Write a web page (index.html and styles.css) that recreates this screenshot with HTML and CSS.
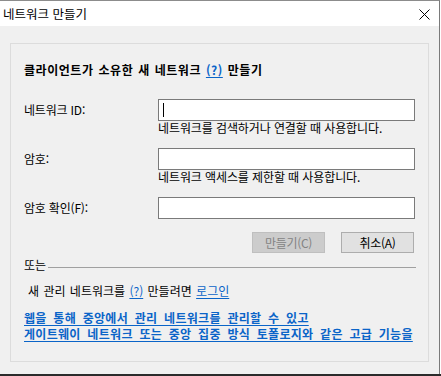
FILE: index.html
```html
<!DOCTYPE html>
<html lang="ko">
<head>
    <meta charset="UTF-8">
    <title>네트워크 만들기</title>
    <link rel="stylesheet" href="styles.css">
</head>
<body>
    <div class="window">
        <div class="titlebar">
            <span class="title">네트워크 만들기</span>
            <svg class="close" width="11" height="11" viewBox="0 0 11 11">
                <path d="M0.5 0.5 L10.5 10.5 M10.5 0.5 L0.5 10.5" stroke="#000" stroke-width="1" fill="none"/>
            </svg>
        </div>

        <div class="client">
            <div class="panel">
                <h1 class="heading">클라이언트가 소유한 새 네트워크 <a class="link">(?)</a> 만들기</h1>

                <div class="form">
                    <label class="label">네트워크 ID:</label>
                    <div class="field"><span class="caret"></span></div>
                    <p class="hint">네트워크를 검색하거나 연결할 때 사용합니다.</p>

                    <label class="label">암호:</label>
                    <div class="field"></div>
                    <p class="hint">네트워크 액세스를 제한할 때 사용합니다.</p>

                    <label class="label">암호 확인(F):</label>
                    <div class="field"></div>
                </div>

                <div class="buttons">
                    <button class="btn" disabled>만들기(C)</button>
                    <button class="btn">취소(A)</button>
                </div>

                <div class="divider">
                    <span>또는</span>
                    <span class="rule"></span>
                </div>

                <p class="login">새 관리 네트워크를 <a class="link">(?)</a> 만들려면 <a class="link">로그인</a></p>

                <div class="promo">
                    <a class="link">웹을 통해 중앙에서 관리 네트워크를 관리할 수 있고</a>
                    <a class="link">게이트웨이 네트워크 또는 중앙 집중 방식 토폴로지와 같은 고급 기능을</a>
                </div>
            </div>
        </div>
    </div>
    <div class="desk"></div>
</body>
</html>
```

FILE: styles.css
```css
* {
    box-sizing: border-box;
    margin: 0;
    padding: 0;
}

body {
    background: #ffffff;
    font-family: "Noto Sans CJK KR", "Noto Sans", sans-serif;
    font-size: 12px;
    color: #000;
    width: 441px;
    height: 376px;
    overflow: hidden;
}

.window {
    width: 440px;
    height: 374px;
    border-top: 1px solid #8c8c8c;
    border-right: 1px solid #7a7a7a;
    display: flex;
    flex-direction: column;
}

.titlebar {
    height: 25px;
    background: #fff;
    display: flex;
    align-items: center;
    justify-content: space-between;
    padding: 0 9px 0 3px;
}

.title {
    font-size: 12.5px;
    line-height: 16px;
}

.close {
    display: block;
    margin-top: 1px;
}

.client {
    flex: 1;
    background: #f0f0f0;
    padding: 17px 10px 12px 10px;
    display: flex;
}

.panel {
    flex: 1;
    border: 1px solid #dcdcdc;
    padding: 0 12px 0 13px;
}

.link {
    color: #0a64c8;
    text-decoration: underline;
    text-underline-offset: 2px;
}

.heading {
    font-size: 12px;
    font-weight: 700;
    line-height: 16px;
    margin-top: 18px;
    letter-spacing: 0.55px;
    word-spacing: 1px;
}

.form {
    display: grid;
    grid-template-columns: 134px 257px;
    margin-top: 21px;
}

.label {
    grid-column: 1;
    align-self: center;
    letter-spacing: -0.2px;
    line-height: 22px;
}

.field {
    grid-column: 2;
    height: 22px;
    background: #fff;
    border: 1px solid #7a7a7a;
    padding: 3px 4px;
}

.caret {
    display: block;
    width: 1px;
    height: 14px;
    background: #000;
}

.hint {
    grid-column: 2;
    line-height: 14px;
    letter-spacing: -0.1px;
    margin-bottom: 13px;
}

.buttons {
    display: flex;
    justify-content: flex-end;
    gap: 16px;
    margin-top: 13px;
    padding-right: 2px;
}

.btn {
    width: 73px;
    height: 21px;
    font-family: inherit;
    font-size: 12px;
    letter-spacing: -0.3px;
    background: #e1e1e1;
    border: 1px solid #adadad;
    color: #000;
}

.btn:disabled {
    background: #cccccc;
    border-color: #bfbfbf;
    color: #838383;
}

.divider {
    display: flex;
    align-items: center;
    gap: 2px;
    margin-top: 4px;
    line-height: 16px;
}

.rule {
    flex: 1;
    height: 1px;
    background: #a0a0a0;
    margin-top: 4px;
}

.login {
    margin: 10px 0 0 4px;
    line-height: 16px;
    word-spacing: 1px;
}

.promo {
    margin-top: 11px;
    display: flex;
    flex-direction: column;
    align-items: flex-start;
    font-weight: 700;
    white-space: nowrap;
    letter-spacing: 0.3px;
    word-spacing: 3px;
}

.promo .link {
    display: block;
    height: 16px;
    line-height: 16px;
}

.desk {
    height: 2px;
    background: #2b2b2b;
}
```
